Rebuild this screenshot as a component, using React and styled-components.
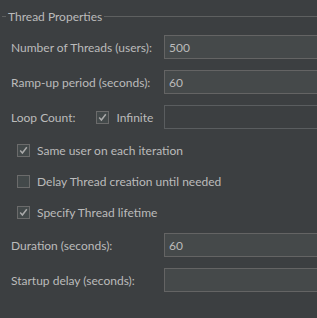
import React from 'react'
import styled, { createGlobalStyle } from 'styled-components'

const GlobalStyle = createGlobalStyle`
  html, body {
    margin: 0;
    padding: 0;
    background: #3c3f41;
    overflow: hidden;
  }
  body {
    font-family: Lato, 'Noto Sans', sans-serif;
    font-size: 12px;
    color: #bbbbbb;
  }
`

const Page = styled.div`
  width: 317px;
  height: 318px;
  padding-top: 8px;
  box-sizing: border-box;
  background: #3c3f41;
  overflow: hidden;
`

const Legend = styled.div`
  display: flex;
  align-items: center;
  height: 17px;
  padding-left: 2px;
  gap: 2px;
  margin-bottom: 10px;

  &::before {
    content: '';
    width: 4px;
    height: 1px;
    background: #5e6060;
  }
  &::after {
    content: '';
    flex: 1;
    height: 1px;
    background: #5e6060;
  }
`

const Form = styled.div`
  display: flex;
  flex-direction: column;
  gap: 11px;
  padding-left: 11px;
`

const Row = styled.div`
  display: grid;
  grid-template-columns: 153px 1fr;
  align-items: center;
  height: 24px;
`

const Label = styled.div`
  display: flex;
  align-items: center;
  white-space: nowrap;
  overflow: hidden;
`

// disabled fields keep the panel colour, enabled ones are a shade lighter
const Field = styled.div`
  height: 24px;
  width: calc(100% + 20px);
  box-sizing: border-box;
  border: 1px solid ${p => (p.$disabled ? '#5a5d5f' : '#646464')};
  background: ${p => (p.$disabled ? '#3c3f41' : '#45494a')};
  padding-left: 4px;
  display: flex;
  align-items: center;
  color: #bbbbbb;
`

const CheckGroup = styled.div`
  display: flex;
  flex-direction: column;
  gap: 11px;
  padding-left: 6px;
`

const CheckRow = styled.label`
  display: flex;
  align-items: center;
  height: 20px;
  gap: 7px;
  margin-left: ${p => p.$offset || 0}px;
`

const Box = styled.span`
  width: 13px;
  height: 13px;
  box-sizing: border-box;
  border: 1px solid #6b6b6b;
  background: #43494a;
  display: flex;
  align-items: center;
  justify-content: center;
`

function Check ({ checked, children, offset }) {
  return (
    <CheckRow $offset={offset}>
      <Box>
        {checked && (
          <svg width="9" height="9" viewBox="0 0 9 9">
            <polyline points="1.2,4.6 3.4,7 7.8,1.2" fill="none" stroke="#a9a9a9" strokeWidth="1.5" />
          </svg>
        )}
      </Box>
      {children}
    </CheckRow>
  )
}

export default function App () {
  return (
    <Page>
      <GlobalStyle />
      <Legend>Thread Properties</Legend>
      <Form>
        <Row>
          <Label>Number of Threads (users):</Label>
          <Field>500</Field>
        </Row>
        <Row>
          <Label>Ramp-up period (seconds):</Label>
          <Field>60</Field>
        </Row>
        <Row>
          <Label>
            Loop Count:
            <Check checked offset={21}>Infinite</Check>
          </Label>
          <Field $disabled />
        </Row>
        <CheckGroup>
          <Check checked>Same user on each iteration</Check>
          <Check>Delay Thread creation until needed</Check>
          <Check checked>Specify Thread lifetime</Check>
        </CheckGroup>
        <Row>
          <Label>Duration (seconds):</Label>
          <Field>60</Field>
        </Row>
        <Row>
          <Label>Startup delay (seconds):</Label>
          <Field />
        </Row>
      </Form>
    </Page>
  )
}
